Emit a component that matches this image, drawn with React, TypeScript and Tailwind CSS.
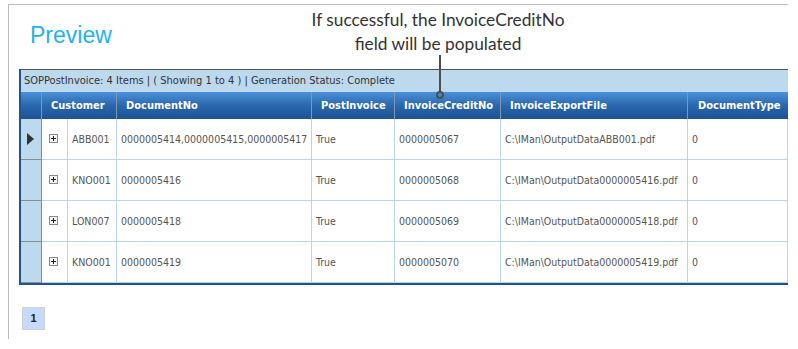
import React from 'react';

type Row = {
  customer: string;
  documentNo: string;
  postInvoice: string;
  creditNo: string;
  exportFile: string;
  documentType: string;
};

const rows: Row[] = [
  {
    customer: 'ABB001',
    documentNo: '0000005414,0000005415,0000005417',
    postInvoice: 'True',
    creditNo: '0000005067',
    exportFile: 'C:\\IMan\\OutputDataABB001.pdf',
    documentType: '0',
  },
  {
    customer: 'KNO001',
    documentNo: '0000005416',
    postInvoice: 'True',
    creditNo: '0000005068',
    exportFile: 'C:\\IMan\\OutputData0000005416.pdf',
    documentType: '0',
  },
  {
    customer: 'LON007',
    documentNo: '0000005418',
    postInvoice: 'True',
    creditNo: '0000005069',
    exportFile: 'C:\\IMan\\OutputData0000005418.pdf',
    documentType: '0',
  },
  {
    customer: 'KNO001',
    documentNo: '0000005419',
    postInvoice: 'True',
    creditNo: '0000005070',
    exportFile: 'C:\\IMan\\OutputData0000005419.pdf',
    documentType: '0',
  },
];

const gridCols = 'grid grid-cols-[21px_26px_49px_195px_83px_106px_187px_100px]';

const ExpandIcon = () => (
  <svg width="9" height="9" viewBox="0 0 9 9" className="block">
    <rect x="0.5" y="0.5" width="8" height="8" fill="#f4f4f4" stroke="#8a8a8a" />
    <path d="M2 4.5h5M4.5 2v5" stroke="#222" strokeWidth="1" />
  </svg>
);

const HeaderCell = ({ label, span }: { label?: string; span?: boolean }) => (
  <div
    className={`flex items-center pt-[2px] px-[9px] border-r border-[#7f97b3] text-white font-bold ${span ? 'col-span-2' : ''}`}
  >
    {label}
  </div>
);

const BodyCell = ({ children }: { children: React.ReactNode }) => (
  <div className="flex items-center pt-[1px] px-[4px] border-r border-b border-[#b8d5ec] whitespace-nowrap overflow-hidden">
    {children}
  </div>
);

const GridRow = ({ row, current }: { row: Row; current: boolean }) => (
  <div className={`${gridCols} h-[41px]`}>
    <div className="flex items-center pl-[6px] bg-[#bdd9ee] border-r border-b border-[#8c8c8c]">
      {current && (
        <svg width="7" height="12" viewBox="0 0 7 12">
          <path d="M0 0L7 6L0 12Z" fill="#333" />
        </svg>
      )}
    </div>
    <div className="flex pt-[15px] pl-[7px] border-r border-b border-[#b8d5ec]">
      <ExpandIcon />
    </div>
    <BodyCell>{row.customer}</BodyCell>
    <BodyCell>{row.documentNo}</BodyCell>
    <BodyCell>{row.postInvoice}</BodyCell>
    <BodyCell>{row.creditNo}</BodyCell>
    <BodyCell>{row.exportFile}</BodyCell>
    <BodyCell>{row.documentType}</BodyCell>
  </div>
);

export default function App() {
  return (
    <div className="w-[798px] h-[349px] bg-white pt-[4px] pl-[8px] font-['Liberation_Sans',Arial,sans-serif]">
      <div className="w-[780px] h-[335px] border-l border-t border-[#bdbdbd]">
        {/* title area with the callout */}
        <div className="relative h-[64px]">
          <div className="absolute left-[21px] top-[19px] text-[23px] leading-none text-[#1fb3ec]">
            Preview
          </div>
          <div className="absolute left-[229px] top-[3px] w-[400px] text-center text-[17.3px] leading-[24px] text-[#333] font-['Lato',sans-serif]">
            <div>If successful, the InvoiceCreditNo</div>
            <div>field will be populated</div>
          </div>
        </div>

        {/* grid */}
        <div className="relative ml-[10px] w-[769px] border-l-2 border-b-2 border-[#1d5496] text-[10.5px] font-['DejaVu_Sans_Condensed','Liberation_Sans',sans-serif]">
          <div className="h-[23px] flex items-center pl-[3px] bg-[#bdd9ee] border-t border-[#555] text-[11px] text-[#333]">
            SOPPostInvoice: 4 Items | ( Showing 1 to 4 ) | Generation Status: Complete
          </div>
          <div className={`${gridCols} h-[27px] text-[11px] bg-gradient-to-b from-[#4b92db] via-[#2a67ad] to-[#1b5394]`}>
            <HeaderCell />
            <HeaderCell label="Customer" span />
            <HeaderCell label="DocumentNo" />
            <HeaderCell label="PostInvoice" />
            <HeaderCell label="InvoiceCreditNo" />
            <HeaderCell label="InvoiceExportFile" />
            <div className="flex items-center pt-[2px] px-[10px] text-white font-bold">DocumentType</div>
          </div>
          <div className="text-[#555]">
            {rows.map((row, i) => (
              <GridRow key={i} row={row} current={i === 0} />
            ))}
          </div>

          {/* callout pointer */}
          <svg
            className="absolute left-[414px] top-[-14px]"
            width="10"
            height="44"
            viewBox="0 0 10 44"
          >
            <path d="M5 0V37" stroke="#4d4d4d" strokeWidth="2" />
            <circle cx="5" cy="40" r="3" fill="none" stroke="#4d4d4d" strokeWidth="2" />
          </svg>
        </div>

        {/* pager */}
        <div className="ml-[13px] mt-[22px] w-[23px] h-[23px] flex items-center justify-center bg-[#c4dafe] border border-[#d2d2d2] text-[11px] font-bold text-[#222]">
          1
        </div>
      </div>
    </div>
  );
}
